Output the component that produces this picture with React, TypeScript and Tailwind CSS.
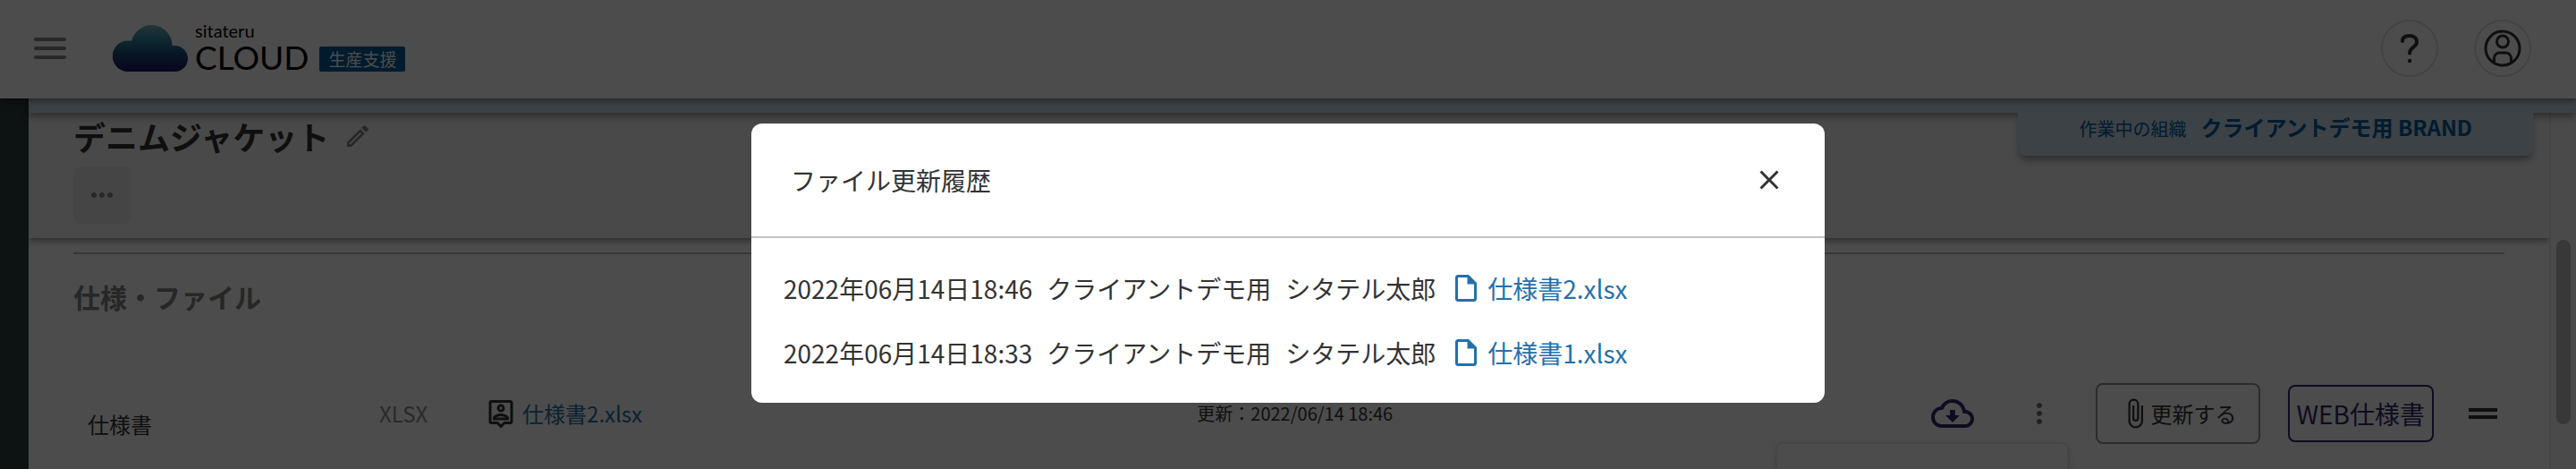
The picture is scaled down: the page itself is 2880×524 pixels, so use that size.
import { useState } from "react";
import {
  MdAttachFile,
  MdClose,
  MdDragHandle,
  MdMoreHoriz,
  MdMoreVert,
  MdOutlineCloudDownload,
  MdOutlineEdit,
  MdOutlineInsertDriveFile,
  MdOutlinePersonPin,
} from "react-icons/md";

const histories = [
  { date: "2022年06月14日18:46", org: "クライアントデモ用", user: "シタテル太郎", file: "仕様書2.xlsx" },
  { date: "2022年06月14日18:33", org: "クライアントデモ用", user: "シタテル太郎", file: "仕様書1.xlsx" },
];

function Logo() {
  return (
    <a href="#" aria-label="sitateru CLOUD" className="flex items-end pb-1 text-black">
      <svg width="84" height="52" viewBox="0 0 84 52" aria-hidden="true">
        <defs>
          <linearGradient id="cloud" x1="0" y1="0" x2="0" y2="1">
            <stop offset="0" stopColor="#7fa9be" />
            <stop offset="0.25" stopColor="#3a94ab" />
            <stop offset="0.6" stopColor="#1c4f7c" />
            <stop offset="1" stopColor="#1b1464" />
          </linearGradient>
        </defs>
        <path
          d="M17 52a17 17 0 0 1 0-34.500h4.200A23 23 0 0 1 66.500 23h3a14.500 14.500 0 0 1 0 29z"
          fill="url(#cloud)"
        />
      </svg>
      <div className="ml-2 flex flex-col gap-1 font-[Lato,sans-serif]">
        <span className="text-[20px] leading-5">sitateru</span>
        <span className="text-[37px] leading-8">CLOUD</span>
      </div>
      <span className="ml-3 flex h-7 items-center rounded-xs bg-[#005a96] px-[10px] text-[19px] leading-7 text-white">
        生産支援
      </span>
    </a>
  );
}

function Header() {
  return (
    <header className="relative z-20 flex h-[110px] shrink-0 items-center justify-between bg-white pr-[50px] pb-[2px] pl-[38px] shadow-[0_2px_8px_rgba(0,0,0,0.5)]">
      <div className="flex items-center gap-[52px]">
        <button type="button" aria-label="メニュー" className="flex w-9 flex-col gap-[6px]">
          <span className="h-1 rounded-full bg-[#828282]" />
          <span className="h-1 rounded-full bg-[#828282]" />
          <span className="h-1 rounded-full bg-[#828282]" />
        </button>
        <Logo />
      </div>
      <div className="flex gap-10">
        <button
          type="button"
          aria-label="ヘルプ"
          className="flex size-16 items-center justify-center rounded-full border-2 border-[#e0e0e0]"
        >
          <svg width="24" height="36" viewBox="0 0 24 36" fill="none" aria-hidden="true">
            <path
              d="M4 10C4 5.500 7.500 4 12 4s8 2.500 8 7c0 6-8 5.500-8 12.500"
              stroke="#333"
              strokeWidth="4"
              strokeLinecap="round"
            />
            <circle cx="12" cy="32" r="2.200" fill="#333" />
          </svg>
        </button>
        <button
          type="button"
          aria-label="アカウント"
          className="flex size-16 items-center justify-center rounded-full border-2 border-[#e0e0e0]"
        >
          <svg width="42" height="42" viewBox="0 0 42 42" fill="none" stroke="#333" strokeWidth="3" aria-hidden="true">
            <circle cx="21" cy="21" r="19" />
            <circle cx="21" cy="13.500" r="6.500" />
            <path d="M11.500 36.500V32a6 6 0 0 1 6-6h7a6 6 0 0 1 6 6v4.500" />
          </svg>
        </button>
      </div>
    </header>
  );
}

function OrgBar() {
  return (
    <div className="relative z-10 h-4 shrink-0 bg-[#cbdce9] shadow-[0_4px_10px_rgba(0,0,0,0.4)]">
      <div className="absolute top-4 right-12 flex h-12 items-start gap-4 rounded-b-lg bg-[#cbdce9] px-[68px] text-[#005a9f] shadow-[0_6px_8px_-2px_rgba(0,0,0,0.4)]">
        <span className="pt-1 text-[20px] leading-7">作業中の組織</span>
        <span className="text-[24px] leading-8 font-bold">クライアントデモ用 BRAND</span>
      </div>
    </div>
  );
}

function FileRow() {
  return (
    <div className="grid grid-cols-[326fr_118fr_796fr_820fr_auto] items-center pl-4 text-[24px] text-[#333]">
      <span className="self-end leading-11">仕様書</span>
      <span className="leading-9 text-[#8c8c8c]">XLSX</span>
      <a href="#" className="flex items-center gap-[6px] leading-9 text-[#2470aa]">
        <MdOutlinePersonPin className="size-9 text-[#333]" />
        仕様書2.xlsx
      </a>
      <span className="text-[20px] leading-8">更新：2022/06/14 18:46</span>
      <div className="flex items-center gap-[31px]">
        <button type="button" aria-label="ダウンロード" className="mr-6 text-[#2f2870]">
          <MdOutlineCloudDownload className="size-12" />
        </button>
        <button type="button" aria-label="その他" className="mr-[14px] text-[#6e6e6e]">
          <MdMoreVert className="size-9" />
        </button>
        <button
          type="button"
          className="flex h-[68px] items-center rounded-lg border-2 border-[#949494] px-6 leading-9"
        >
          <MdAttachFile className="size-9" />
          更新する
        </button>
        <button
          type="button"
          className="h-16 rounded-lg border-2 border-[#2f2870] px-2 text-[28px] leading-10 text-[#2f2870]"
        >
          WEB仕様書
        </button>
        <MdDragHandle className="size-12" />
      </div>
    </div>
  );
}

function HistoryDialog({ onClose }: { onClose: () => void }) {
  return (
    <div className="fixed inset-0 z-50 flex items-start justify-center bg-black/70 pt-[138px]">
      <div
        role="dialog"
        aria-modal="true"
        aria-labelledby="history-title"
        className="w-full max-w-[1200px] rounded-xl bg-white text-[28px] text-[#333]"
      >
        <div className="flex h-32 items-center justify-between border-b-2 border-[#c4c4c4] px-11">
          <h2 id="history-title" className="leading-10">
            ファイル更新履歴
          </h2>
          <button type="button" aria-label="閉じる" onClick={onClose}>
            <MdClose className="size-9" />
          </button>
        </div>
        <ul className="flex flex-col gap-8 px-9 py-9">
          {histories.map((item) => (
            <li key={item.file} className="flex items-center gap-4 leading-10">
              <span>{item.date}</span>
              <span>{item.org}</span>
              <span>{item.user}</span>
              <a href="#" className="flex items-center gap-[6px] text-[#2470aa]">
                <MdOutlineInsertDriveFile className="size-9" />
                {item.file}
              </a>
            </li>
          ))}
        </ul>
      </div>
    </div>
  );
}

export default function App() {
  const [open, setOpen] = useState(true);

  return (
    <div className="flex h-screen flex-col overflow-hidden bg-white font-['Noto_Sans_CJK_JP',sans-serif]">
      <Header />
      <div className="flex min-h-0 flex-1">
        <nav className="w-8 shrink-0 bg-[#2d3c3d]" />
        <div className="flex min-w-0 flex-1 flex-col">
          <OrgBar />
          <div className="flex min-h-0 flex-1">
            <main className="relative min-w-0 flex-1 overflow-hidden">
              <section className="h-[140px] bg-[#f4f4f4] px-[50px] shadow-[0_2px_8px_rgba(0,0,0,0.5)]">
                <div className="flex items-center gap-4 pt-[2px]">
                  <h1 className="text-[36px] leading-[48px] font-bold text-[#333]">デニムジャケット</h1>
                  <button type="button" aria-label="編集" className="text-[#828282]">
                    <MdOutlineEdit className="size-8" />
                  </button>
                </div>
                <button
                  type="button"
                  aria-label="メニューを開く"
                  className="mt-[10px] flex size-16 items-center justify-center rounded-lg bg-[#e8e8e8] text-[#828282]"
                >
                  <MdMoreHoriz className="size-9" />
                </button>
              </section>
              <section className="px-[50px] pt-4">
                <h2 className="mb-[76px] border-t-2 border-[#b8b8b8] pt-[26px] text-[30px] leading-[42px] font-bold text-[#828282]">
                  仕様・ファイル
                </h2>
                <FileRow />
              </section>
              <div className="absolute right-[537px] bottom-0 h-[30px] w-[328px] rounded-t-lg border-2 border-b-0 border-[#ececec] bg-white shadow-[0_4px_10px_rgba(0,0,0,0.15)]" />
            </main>
            <div className="w-[30px] shrink-0 border-l-2 border-[#e6e6e6] bg-[#f7f7f7] pt-[142px] pl-[6px]">
              <div className="h-[206px] w-4 rounded-full bg-[#bdbdbd]" />
            </div>
          </div>
        </div>
      </div>
      {open && <HistoryDialog onClose={() => setOpen(false)} />}
    </div>
  );
}
